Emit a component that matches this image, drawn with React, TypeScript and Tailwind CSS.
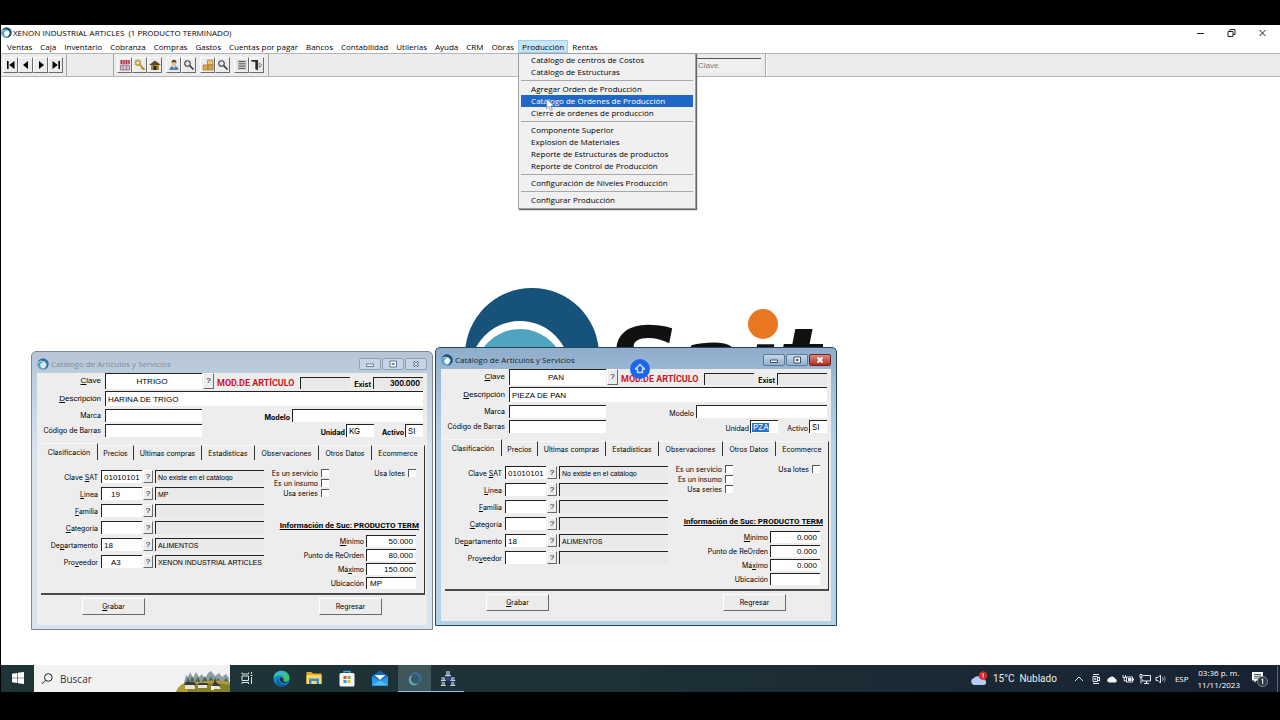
import type { ReactNode } from 'react'

const menus = [
  'Ventas',
  'Caja',
  'Inventario',
  'Cobranza',
  'Compras',
  'Gastos',
  'Cuentas por pagar',
  'Bancos',
  'Contabilidad',
  'Utilerías',
  'Ayuda',
  'CRM',
  'Obras',
  'Producción',
  'Rentas',
]

const productionMenu = [
  ['Catálogo de centros de Costos', 'Catálogo de Estructuras'],
  ['Agregar Orden de Producción', 'Catálogo de Ordenes de Producción', 'Cierre de ordenes de producción'],
  [
    'Componente Superior',
    'Explosion de Materiales',
    'Reporte de Estructuras de productos',
    'Reporte de Control de Producción',
  ],
  ['Configuración de Niveles Producción'],
  ['Configurar Producción'],
]

const SELECTED = 'Catálogo de Ordenes de Producción'

const tabs = [
  { label: 'Clasificación', width: 'w-[57px]' },
  { label: 'Precios', width: 'w-[36px]' },
  { label: 'Ultimas compras', width: 'w-[68px]' },
  { label: 'Estadísticas', width: 'w-[53px]' },
  { label: 'Observaciones', width: 'w-[64px]' },
  { label: 'Otros Datos', width: 'w-[53px]' },
  { label: 'Ecommerce', width: 'w-[53px]' },
]

type Lookup = { label: string; code: string; text: string; indent?: boolean }

type Article = {
  id: string
  active: boolean
  clave: string
  descripcion: string
  exist: string
  unidad: string
  lookups: Lookup[]
  stock: { label: string; value: string }[]
}

const trigo: Article = {
  id: 'trigo',
  active: false,
  clave: 'HTRIGO',
  descripcion: 'HARINA DE TRIGO',
  exist: '300.000',
  unidad: 'KG',
  lookups: [
    { label: 'Clave &SAT', code: '01010101', text: 'No existe en el catálogo' },
    { label: '&Linea', code: '19', text: 'MP', indent: true },
    { label: '&Familia', code: '', text: '' },
    { label: '&Categoría', code: '', text: '' },
    { label: 'De&partamento', code: '18', text: 'ALIMENTOS' },
    { label: 'Pro&veedor', code: 'A3', text: 'XENON INDUSTRIAL ARTICLES', indent: true },
  ],
  stock: [
    { label: '&Mínimo', value: '50.000' },
    { label: 'Punto de ReOrden', value: '80.000' },
    { label: 'Má&ximo', value: '150.000' },
    { label: 'Ubicación', value: 'MP' },
  ],
}

const pan: Article = {
  id: 'pan',
  active: true,
  clave: 'PAN',
  descripcion: 'PIEZA DE PAN',
  exist: '',
  unidad: 'PZA',
  lookups: [
    { label: 'Clave &SAT', code: '01010101', text: 'No existe en el catálogo' },
    { label: '&Linea', code: '', text: '' },
    { label: '&Familia', code: '', text: '' },
    { label: '&Categoría', code: '', text: '' },
    { label: 'De&partamento', code: '18', text: 'ALIMENTOS' },
    { label: 'Pro&veedor', code: '', text: '' },
  ],
  stock: [
    { label: '&Mínimo', value: '0.000' },
    { label: 'Punto de ReOrden', value: '0.000' },
    { label: 'Má&ximo', value: '0.000' },
    { label: 'Ubicación', value: '' },
  ],
}

const sunken = 'min-w-0 shrink-0 border-t border-l border-[#222] outline-none'
const raised =
  'flex shrink-0 items-center justify-center border border-t-white border-l-white border-r-[#6b6b6b] border-b-[#6b6b6b] bg-[#ececec] leading-none'
const labelFont = "font-['Inter','Liberation_Sans',sans-serif] text-[7px] leading-[9px]"

// "&" marks the shortcut letter that gets underlined
function Mnemonic({ text }: { text: string }) {
  const i = text.indexOf('&')
  if (i < 0) return <>{text}</>
  return (
    <>
      {text.slice(0, i)}
      <span className="underline">{text[i + 1]}</span>
      {text.slice(i + 2)}
    </>
  )
}

function SwirlLogo({ className, faded }: { className: string; faded?: boolean }) {
  return (
    <svg viewBox="0 0 24 24" className={className} aria-hidden>
      <circle cx="12" cy="12" r="11.5" fill={faded ? '#35709b' : '#17527a'} />
      <path d="M1.500 9c4-5 13-5 17 1.500C20 15 17 21 10 23.300 3 21 0 15 1.500 9z" fill="#d9ebf5" />
      <path d="M2 10.500c3-4 10-5 14-1-5-2-10 1-9.500 5.500C7 19 10 21 14 20.500c-1.500 1.300-3 2.200-5 2.500C3.500 21 .8 16 2 10.500z" fill="#4aa3bd" />
      <circle cx="12.500" cy="13.500" r="5" fill={faded ? '#dbe7f1' : '#fff'} />
    </svg>
  )
}

function ToolButton({ label, children }: { label: string; children: ReactNode }) {
  return (
    <button aria-label={label} className={`${raised} h-[16px] w-[15px]`}>
      {children}
    </button>
  )
}

function NavIcon({ d }: { d: string }) {
  return (
    <svg viewBox="0 0 12 12" className="h-3 w-3" fill="#000" aria-hidden>
      <path d={d} />
    </svg>
  )
}

function Magnifier() {
  return (
    <svg viewBox="0 0 12 12" className="h-3 w-3" aria-hidden>
      <circle cx="4.500" cy="4.500" r="2.800" fill="#dfe9f2" stroke="#444" strokeWidth="1.100" />
      <path d="M6.800 6.800l3.700 3.700" stroke="#333" strokeWidth="1.600" />
    </svg>
  )
}

function Toolbar() {
  return (
    <div className="flex h-6 items-stretch border-t border-b border-[#b4b4b4] bg-[#ececec]">
      <div className="flex w-[66px] items-center border-r border-[#a8a8a8] pl-[2px]">
        <ToolButton label="Primero">
          <NavIcon d="M2 2h1.600v8H2zM9.500 2v8L4.200 6z" />
        </ToolButton>
        <ToolButton label="Anterior">
          <NavIcon d="M8 2v8L3 6z" />
        </ToolButton>
        <ToolButton label="Siguiente">
          <NavIcon d="M4 2v8l5-4z" />
        </ToolButton>
        <ToolButton label="Último">
          <NavIcon d="M2.500 2v8l5.300-4zM8.400 2H10v8H8.400z" />
        </ToolButton>
      </div>
      <div className="w-[47px] border-r border-[#a8a8a8]" />
      <div className="flex w-[155px] items-center gap-1 border-r border-[#a8a8a8] pl-[3px]">
        <div className="flex">
          <ToolButton label="Punto de venta">
            <svg viewBox="0 0 12 12" className="h-3 w-3" aria-hidden>
              <path d="M1 1h10v4H1z" fill="#d98a94" />
              <path d="M2.500 1v4M5 1v4M7.500 1v4M10 1v4" stroke="#a02f45" />
              <path d="M1.500 6h9v5h-9z" fill="#d3c4ce" stroke="#8e6a80" strokeWidth=".8" />
              <path d="M4 6v5M7.500 6v5" stroke="#8e6a80" strokeWidth=".8" />
            </svg>
          </ToolButton>
          <ToolButton label="Llave">
            <svg viewBox="0 0 12 12" className="h-3 w-3" fill="none" aria-hidden>
              <circle cx="3.800" cy="3.800" r="2.300" stroke="#c9a24a" strokeWidth="1.900" />
              <path d="M5.600 5.600l5 5M8.300 8.500l-1.200 1.200M9.800 9.800l-1 1" stroke="#b98f35" strokeWidth="1.500" />
            </svg>
          </ToolButton>
          <ToolButton label="Almacén">
            <svg viewBox="0 0 12 12" className="h-3 w-3" aria-hidden>
              <path d="M0 6l6-4.500L12 6z" fill="#5d4c22" />
              <path d="M2 6h8v5H2z" fill="#9d8542" />
              <path d="M4.500 7h3v4h-3z" fill="#2e2614" />
            </svg>
          </ToolButton>
        </div>
        <div className="flex">
          <ToolButton label="Clientes">
            <svg viewBox="0 0 12 12" className="h-3 w-3" aria-hidden>
              <path d="M1.500 11c0-3 2-4 4.500-4s4.500 1 4.500 4z" fill="#4d7fa8" />
              <path d="M5 7h2l-1 3z" fill="#fff" />
              <ellipse cx="6" cy="4" rx="2.300" ry="2.900" fill="#e2b884" />
              <path d="M3.600 3.800C3.500 1.800 4.500.8 6 .8s2.500 1 2.400 3C7.500 2.600 5 2.600 3.600 3.800z" fill="#5c4322" />
            </svg>
          </ToolButton>
          <ToolButton label="Buscar cliente">
            <Magnifier />
          </ToolButton>
        </div>
        <div className="flex">
          <ToolButton label="Artículos">
            <svg viewBox="0 0 12 12" className="h-3 w-3" stroke="#9b7430" strokeWidth=".7" aria-hidden>
              <path d="M5.500 1h5.500v5H5.500z" fill="#edc374" />
              <path d="M1 6h5v5H1z" fill="#e0a94e" />
              <path d="M6 6h5v5H6z" fill="#d8a24c" />
            </svg>
          </ToolButton>
          <ToolButton label="Buscar artículo">
            <Magnifier />
          </ToolButton>
        </div>
        <div className="flex">
          <ToolButton label="Reporte">
            <svg viewBox="0 0 12 12" className="h-3 w-3" aria-hidden>
              <path d="M1.500 1h9v10h-9z" fill="#d4d4d4" />
              <path d="M2.500 2.500h7M2.500 4.800h7M2.500 7.100h7M2.500 9.400h7" stroke="#555" />
            </svg>
          </ToolButton>
          <ToolButton label="Salir">
            <svg viewBox="0 0 12 12" className="h-3 w-3" aria-hidden>
              <path d="M.5 1H7v10.500L4.300 10V2.800H.5z" fill="#2b2b2b" />
              <path d="M8.200 3.800L11 6.200 8.200 8.600z" fill="none" stroke="#777" strokeWidth=".9" />
            </svg>
          </ToolButton>
        </div>
      </div>
      <div className="flex w-[497px] items-center justify-end border-r border-[#a8a8a8] pr-1">
        <input
          aria-label="Clave"
          placeholder="Clave"
          className="h-[15px] w-[68px] border-t border-l border-[#555] bg-[#efefef] pl-1 text-[8px] outline-none placeholder:text-[#7d7d7d]"
        />
      </div>
      <div className="flex-1 border-l border-white" />
    </div>
  )
}

function ProductionMenu() {
  return (
    <div className="absolute top-full left-0 z-30 w-[178px] border border-[#a0a0a0] bg-[#f0f0f0] px-[2px] pb-[2px] shadow-[1px_1px_1px_#666]">
      {productionMenu.map((group, i) => (
        <ul key={i} className={i > 0 ? 'mt-[2px] border-t border-[#a8a8a8] pt-[2px]' : ''}>
          {group.map((item) => (
            <li key={item}>
              <button
                className={`block h-3 w-full pl-[10px] text-left leading-3 whitespace-nowrap ${
                  item === SELECTED ? 'bg-[#1f68c6] text-white' : ''
                }`}
              >
                {item}
              </button>
            </li>
          ))}
        </ul>
      ))}
      <svg viewBox="0 0 12 18" className="absolute top-[44px] left-[27px] h-[14px] w-[9px]" aria-hidden>
        <path d="M1 1v13l3-3 2.200 5 2.300-1-2.200-4.800H11z" fill="#fff" stroke="#667" strokeWidth=".8" />
      </svg>
    </div>
  )
}

function MenuBar() {
  return (
    <nav aria-label="Principal">
      <ul className="flex h-[13px] items-stretch pl-[2px] leading-[13px]">
        {menus.map((menu) => (
          <li key={menu} className="relative">
            <button
              className={`block h-full border px-[3px] leading-[11px] whitespace-nowrap ${
                menu === 'Producción' ? 'border-[#99d1f5] bg-[#c6e5f8]' : 'border-transparent'
              }`}
            >
              {menu}
            </button>
            {menu === 'Producción' && <ProductionMenu />}
          </li>
        ))}
      </ul>
    </nav>
  )
}

function TitleBar() {
  return (
    <header className="flex h-[15px] items-center">
      <SwirlLogo className="h-[11px] w-[11px]" />
      <h1 className="ml-px whitespace-pre">XENON INDUSTRIAL ARTICLES  (1 PRODUCTO TERMINADO)</h1>
      <div className="ml-auto flex gap-[20px] pr-3">
        <button aria-label="Minimizar">
          <svg viewBox="0 0 10 10" className="h-[10px] w-[11px]" stroke="#222" aria-hidden>
            <path d="M1.500 5.500h7" />
          </svg>
        </button>
        <button aria-label="Restaurar">
          <svg viewBox="0 0 10 10" className="h-[10px] w-[11px]" fill="none" stroke="#222" aria-hidden>
            <path d="M1.500 3.500h5v5h-5zM3.500 3.500v-2h5v5h-2" />
          </svg>
        </button>
        <button aria-label="Cerrar">
          <svg viewBox="0 0 10 10" className="h-[10px] w-[11px]" stroke="#222" aria-hidden>
            <path d="M2 2l6 6M8 2L2 8" />
          </svg>
        </button>
      </div>
    </header>
  )
}

function WindowButtons({ active }: { active: boolean }) {
  const base = 'flex h-[12px] w-[22px] items-center justify-center rounded-[2px] border'
  const plain = active ? 'border-[#5f7890] bg-linear-to-b from-[#c6d8ea] to-[#92b0cd]' : 'border-[#8fa1b3] bg-[#c5d5e5]'
  const ink = active ? '#3d5068' : '#66788a'
  return (
    <div className="ml-auto flex gap-[1px]">
      <button aria-label="Minimizar" className={`${base} ${plain}`}>
        <svg viewBox="0 0 10 8" className="h-2 w-[10px]" fill="#fff" stroke={ink} aria-hidden>
          <path d="M1.500 4h7v2.500h-7z" />
        </svg>
      </button>
      <button aria-label="Maximizar" className={`${base} ${plain}`}>
        <svg viewBox="0 0 10 8" className="h-2 w-[10px]" fill="#fff" stroke={ink} aria-hidden>
          <path d="M2 1h6.500v6H2zM4.200 3.500h2v1.200h-2z" />
        </svg>
      </button>
      <button
        aria-label="Cerrar"
        className={`${base} ${active ? 'border-[#6b2525] bg-linear-to-b from-[#d88a80] to-[#b3251c]' : plain}`}
      >
        <svg viewBox="0 0 10 8" className="h-2 w-[10px]" aria-hidden>
          <path d="M2.500 1.500l5 5M7.500 1.500l-5 5" stroke={active ? '#fff' : ink} strokeWidth={active ? 1.8 : 2.4} />
          {!active && <path d="M2.500 1.500l5 5M7.500 1.500l-5 5" stroke="#e4edf5" strokeWidth="1" />}
        </svg>
      </button>
    </div>
  )
}

function HelpButton({ label, className }: { label: string; className: string }) {
  return (
    <button type="button" aria-label={`Buscar ${label.replace('&', '')}`} className={`${raised} ${className}`}>
      ?
    </button>
  )
}

function LookupRow({ id, row }: { id: string; row: Lookup }) {
  return (
    <div className="flex h-[13px] items-center">
      <label htmlFor={id} className={`w-[57px] pt-[2px] text-right ${labelFont}`}>
        <Mnemonic text={row.label} />
      </label>
      <input
        id={id}
        defaultValue={row.code}
        className={`${sunken} ml-[3px] h-[13px] w-[41px] bg-white text-[8px] ${row.indent ? 'pl-[9px]' : 'pl-[2px]'}`}
      />
      <HelpButton label={row.label} className="ml-px h-[13px] w-[10px] text-[8px]" />
      <input
        aria-label={`${row.label.replace('&', '')}, nombre`}
        readOnly
        defaultValue={row.text}
        className={`${sunken} ml-[2px] h-[13px] w-[109px] bg-[#e9e9e9] pl-[2px] text-[7px]`}
      />
    </div>
  )
}

function Check({ id, label }: { id: string; label: string }) {
  return (
    <div className="flex h-[10px] items-center justify-end gap-[3px]">
      <label htmlFor={id} className={`whitespace-nowrap ${labelFont}`}>
        {label}
      </label>
      <input
        id={id}
        type="checkbox"
        className="h-2 w-2 shrink-0 appearance-none border-t border-l border-[#555] bg-white"
      />
    </div>
  )
}

function ArticleWindow({ article, className }: { article: Article; className: string }) {
  const { id, active } = article
  const strong = active ? '' : 'font-bold'
  return (
    <section
      className={`absolute flex w-[402px] flex-col rounded-t-[5px] border px-[5px] pb-1 ${
        active
          ? 'border-[#1f4a55] bg-[#b4d2e9] bg-linear-to-b from-[#8fadcc] via-[#a9c4de] via-20% to-[#b4d2e9] to-35%'
          : 'border-[#7c8794] bg-[#d7e3ef] bg-linear-to-b from-[#b6c6d7] via-[#c6d6e6] via-20% to-[#d7e3ef] to-35%'
      } ${className}`}
    >
      <header className="flex h-[21px] items-center pt-[2px]">
        <SwirlLogo className="h-[12px] w-[12px]" faded={!active} />
        <h2
          className={`ml-[2px] font-['Open_Sans','Noto_Sans',sans-serif] text-[8px] ${
            active ? 'text-[#16222e]' : 'text-[#7d8b99]'
          }`}
        >
          Catálogo de Artículos y Servicios
        </h2>
        <WindowButtons active={active} />
      </header>

      <form className="bg-[#ededed] pb-[10px]" onSubmit={(e) => e.preventDefault()}>
        <div className="flex flex-col pr-1">
          <div className="flex h-4 items-center text-[8px] leading-[10px]">
            <label htmlFor={`${id}-clave`} className="w-16 text-right">
              <Mnemonic text="&Clave" />
            </label>
            <input
              id={`${id}-clave`}
              defaultValue={article.clave}
              className={`${sunken} ml-1 h-4 w-[97px] bg-white pr-1 text-center`}
            />
            <HelpButton label="Clave" className="ml-px h-4 w-[11px]" />
            <label
              htmlFor={`${id}-mod`}
              className="ml-[3px] w-[83px] shrink-0 pt-1 font-['Roboto','Liberation_Sans',sans-serif] text-[9px] leading-3 font-bold whitespace-nowrap text-[#cf1526]"
            >
              MOD.DE ARTÍCULO
            </label>
            <input id={`${id}-mod`} readOnly className={`${sunken} h-3 w-[50px] self-end bg-[#e9e9e9]`} />
            <label htmlFor={`${id}-exist`} className={`ml-auto self-end font-bold ${labelFont}`}>
              Exist
            </label>
            <input
              id={`${id}-exist`}
              readOnly
              defaultValue={article.exist}
              className={`${sunken} ml-[2px] h-3 w-[50px] self-end bg-[#e9e9e9] pr-[3px] text-right font-bold ${labelFont}`}
            />
          </div>
          <div className="mt-[2px] flex h-[15px] items-center text-[8px]">
            <label htmlFor={`${id}-descripcion`} className="w-16 text-right">
              <Mnemonic text="&Descripción" />
            </label>
            <input
              id={`${id}-descripcion`}
              defaultValue={article.descripcion}
              className={`${sunken} ml-1 h-[15px] flex-1 bg-white pl-[2px]`}
            />
          </div>
          <div className={`mt-[3px] flex h-[13px] items-center ${labelFont}`}>
            <label htmlFor={`${id}-marca`} className="w-16 text-right">
              Marca
            </label>
            <input id={`${id}-marca`} className={`${sunken} ml-1 h-[13px] w-[97px] bg-white`} />
            <label htmlFor={`${id}-modelo`} className={`ml-auto self-end ${strong}`}>
              Modelo
            </label>
            <input id={`${id}-modelo`} className={`${sunken} ml-[2px] h-[13px] w-[131px] bg-white`} />
          </div>
          <div className={`mt-[2px] flex h-[13px] items-center ${labelFont}`}>
            <label htmlFor={`${id}-barras`} className="w-16 text-right whitespace-nowrap">
              Código de Barras
            </label>
            <input id={`${id}-barras`} className={`${sunken} ml-1 h-[13px] w-[97px] bg-white`} />
            <label htmlFor={`${id}-unidad`} className={`ml-auto self-end ${strong}`}>
              Unidad
            </label>
            <span className={`${sunken} ml-px flex h-[13px] w-[28px] items-center bg-white pl-px`}>
              <input
                id={`${id}-unidad`}
                defaultValue={article.unidad}
                className={`h-[9px] w-[17px] pl-px text-[8px] outline-none ${active ? 'bg-[#2b70c9] text-white' : ''}`}
              />
            </span>
            <label htmlFor={`${id}-activo`} className={`w-[30px] self-end text-right ${strong}`}>
              Activo
            </label>
            <input
              id={`${id}-activo`}
              defaultValue="SI"
              className={`${sunken} ml-px h-[13px] w-[18px] bg-white pl-[2px] text-[8px]`}
            />
          </div>
        </div>

        <div role="tablist" className={`mt-[6px] ml-1 flex h-[17px] items-end ${labelFont}`}>
          {tabs.map((tab, i) => (
            <button
              key={tab.label}
              type="button"
              role="tab"
              aria-selected={i === 0}
              className={`flex shrink-0 items-center justify-center border-t border-r border-t-[#f8f8f8] border-r-[#333] whitespace-nowrap ${
                i === 0 ? 'h-[17px]' : 'h-[15px]'
              } ${tab.width}`}
            >
              {tab.label}
            </button>
          ))}
        </div>

        <div className="mr-[2px] ml-1 flex h-[135px] border-r border-b-2 border-r-[#333] border-b-[#4a4a4a]">
          <div className="flex flex-col gap-1 pt-[10px]">
            {article.lookups.map((row) => (
              <LookupRow key={row.label} id={`${id}-${row.label}`} row={row} />
            ))}
          </div>
          <div className="flex flex-1 flex-col pt-2">
            <div className="flex items-start justify-between pr-2">
              <div className="w-[65px]">
                <Check id={`${id}-servicio`} label="Es un servicio" />
                <Check id={`${id}-insumo`} label="Es un insumo" />
                <Check id={`${id}-series`} label="Usa series" />
              </div>
              <Check id={`${id}-lotes`} label="Usa lotes" />
            </div>
            <h3 className="mt-[23px] pr-[5px] text-right font-['Roboto','Liberation_Sans',sans-serif] text-[8px] leading-[10px] font-bold whitespace-nowrap underline">
              Información de Suc: PRODUCTO TERM
            </h3>
            <div className="mt-1 flex flex-col gap-[2px] pr-2">
              {article.stock.map((row) => (
                <div key={row.label} className="flex h-3 items-center justify-end">
                  <label htmlFor={`${id}-${row.label}`} className={labelFont}>
                    <Mnemonic text={row.label} />
                  </label>
                  <input
                    id={`${id}-${row.label}`}
                    defaultValue={row.value}
                    className={`${sunken} ml-[2px] h-3 w-[50px] bg-white px-[3px] text-[8px] ${
                      row.label === 'Ubicación' ? '' : 'text-right'
                    }`}
                  />
                </div>
              ))}
            </div>
          </div>
        </div>

        <div className={`mt-[3px] flex justify-between pr-[45px] pl-[45px] ${labelFont}`}>
          <button className={`${raised} h-[17px] w-[63px]`}>
            <span>
              <Mnemonic text="&Grabar" />
            </span>
          </button>
          <button type="button" className={`${raised} h-[17px] w-[63px]`}>
            Regresar
          </button>
        </div>
      </form>
    </section>
  )
}

function BrandLogo() {
  return (
    <svg viewBox="459 280 364 150" className="mx-auto h-[150px] w-[364px]" aria-hidden>
      <circle cx="532" cy="355" r="67" fill="#17527a" />
      <circle cx="520" cy="371" r="50" fill="#fff" />
      <circle cx="520" cy="374" r="45" fill="#4fa5bd" />
      <text
        x="607"
        y="398"
        fontSize="98"
        fontWeight="bold"
        fontStyle="italic"
        fill="#111"
        fontFamily="'DejaVu Sans', sans-serif"
      >
        Saıt
      </text>
      <circle cx="763" cy="324" r="15" fill="#e87722" />
    </svg>
  )
}

function Desktop() {
  return (
    <main className="relative flex-1 overflow-hidden bg-white pt-[203px]">
      <BrandLogo />
      <ArticleWindow article={trigo} className="top-[274px] left-[30px]" />
      <ArticleWindow article={pan} className="top-[270px] left-[434px]" />
      <button
        aria-label="Subir"
        className="absolute top-[282px] left-[629px] flex h-5 w-5 items-center justify-center rounded-full bg-[#1d66ea]"
      >
        <svg viewBox="0 0 14 14" className="h-[14px] w-[14px]" fill="none" stroke="#cfe0ff" aria-hidden>
          <path d="M7 2.500l4.500 4.500H9.500v3.500h-5V7h-2z" strokeLinejoin="round" strokeWidth="1.400" />
        </svg>
      </button>
    </main>
  )
}

function TaskButton({ label, state, children }: { label: string; state?: 'active' | 'open'; children: ReactNode }) {
  return (
    <button
      aria-label={label}
      className={`flex h-full w-[33px] items-center justify-center border-b ${
        state === 'active'
          ? 'border-[#8fc3ea] bg-[#3f565b]'
          : state === 'open'
            ? 'border-[#8fc3ea]'
            : 'border-transparent'
      }`}
    >
      {children}
    </button>
  )
}

function SearchPicture() {
  return (
    <svg viewBox="0 0 54 27" className="h-full w-[54px]" aria-hidden>
      <path d="M8 18l2-8 2 2 2-5 3 6 3-6 3 5 3-3 3 5 3-6 3-2 4 5 4-3 3 4 4-3 3 4v14H8z" fill="#8b9da6" />
      <path d="M10 18l2-6 2 5 2-6 3 6 3-5 3 6 4-7 3 6 3-6 3 7 4-5 4 6 4-6 4 7v6H10z" fill="#4e6350" />
      <path d="M0 27c3-9 12-12 24-10 10-2 22-2 30 0v10z" fill="#b09a35" />
      <path d="M12 23c12-5 26-6 42-3v7H12z" fill="#83822a" />
      <path d="M9 19h8l2 3v2H9zM22 20h9v3h-9zM36 21h7l2 3h-9z" fill="#e9e4d8" />
      <path d="M8 19l2-2h8l3 3H9zM21 20l2-2h8l2 2zM36 21l2-4 1-5 1 5 5 4z" fill="#3a3a3c" />
      <path d="M35 21h3v4h-3z" fill="#f3f0e6" />
    </svg>
  )
}

function Taskbar() {
  return (
    <footer className="flex h-[27px] items-stretch bg-linear-to-r from-[#1e3538] via-[#1d3036] to-[#172232] text-white">
      <TaskButton label="Inicio">
        <svg viewBox="0 0 12 12" className="h-3 w-3" fill="#fff" aria-hidden>
          <path d="M0 1.700l5.300-.8v4.800H0zM5.900.8L12 0v5.700H5.900zM0 6.300h5.300v4.800L0 10.300zM5.900 6.300H12V12l-6.100-.8z" />
        </svg>
      </TaskButton>
      <div className="flex w-[196px] items-center bg-[#f2f2f2] pl-[7px] text-[#333]">
        <svg viewBox="0 0 12 12" className="h-3 w-3 shrink-0" fill="none" stroke="#222" aria-hidden>
          <circle cx="7.300" cy="4.500" r="3.800" />
          <path d="M4.500 7.200L.8 11" />
        </svg>
        <input
          aria-label="Buscar"
          placeholder="Buscar"
          className="ml-[7px] min-w-0 flex-1 pt-px text-[10px] outline-none placeholder:text-[#333]"
        />
        <SearchPicture />
      </div>
      <TaskButton label="Vista de tareas">
        <svg viewBox="0 0 12 12" className="h-3 w-3" fill="none" stroke="#dfe6e8" aria-hidden>
          <path d="M1 4h6.500v4.500H1zM1 .5V2h6.500V.5M1 12v-1.500h6.500V12M10.500 0v2M10.500 5v7M9.500 3.500h2" />
        </svg>
      </TaskButton>
      <TaskButton label="Edge">
        <svg viewBox="0 0 18 18" className="ml-[3px] h-[17px] w-[17px]" aria-hidden>
          <circle cx="9" cy="9" r="8.500" fill="#1a86cf" />
          <path d="M.7 7.500C2 2 8 0 12.500 1.500 16 3 18 6 17.400 9.500c-.6 2.500-4 3.500-6.400 2 1.500-3-.5-5.500-3.500-5.700C4 5.500 1.500 7 .7 9z" fill="#3cc26b" />
          <path d="M.7 7.500C1.500 3.500 5 1 9 1c3 1 5 3 4 6-1-2-4-3-6-2.500C3.500 5 1.500 6.500.7 7.500z" fill="#36b7d8" />
          <path d="M6 9c-.5 4 3 7 8.500 6C12 17.800 8 18 5 16.500 2.500 14 3 10 6 9z" fill="#0f5aa6" />
          <path d="M7.500 8.500c1.500-1.500 4 0 3.500 3 .5 1.500 3.500 2 5.500.5-1 2-5 3-7.500 1-1.500-1.200-2.200-3-1.500-4.500z" fill="#1e3538" />
        </svg>
      </TaskButton>
      <TaskButton label="Explorador de archivos">
        <svg viewBox="0 0 16 14" className="ml-[3px] h-[14px] w-[16px]" aria-hidden>
          <path d="M.5 1h5l1.500 1.500h8.500V13H.5z" fill="#e6a91f" />
          <path d="M.5 4h15v9H.5z" fill="#fbd766" />
          <path d="M3 7.500h10V13h-2.500v-3h-5v3H3z" fill="#3b8fd0" />
        </svg>
      </TaskButton>
      <TaskButton label="Tienda">
        <svg viewBox="0 0 16 17" className="ml-[3px] h-[17px] w-4" aria-hidden>
          <path d="M5 4V1.500h6V4" fill="none" stroke="#35a7e0" strokeWidth="1.500" />
          <rect x=".5" y="3" width="15" height="13.500" rx="1.500" fill="#f4f6f7" />
          <path d="M4.500 6h3v3h-3z" fill="#e5512b" />
          <path d="M8.500 6h3v3h-3z" fill="#7db82b" />
          <path d="M4.500 10h3v3h-3z" fill="#2e9bdc" />
          <path d="M8.500 10h3v3h-3z" fill="#f6b71a" />
        </svg>
      </TaskButton>
      <TaskButton label="Correo">
        <svg viewBox="0 0 18 16" className="ml-[3px] h-4 w-[18px]" aria-hidden>
          <path d="M1 6l8-5.500L17 6v9.500H1z" fill="#1565b8" />
          <path d="M3.500 5h11L9 10z" fill="#f2f6fa" />
          <path d="M1 6l8 5 8-5v9.500H1z" fill="#2a9be6" />
          <path d="M1 15.500l8-5 8 5z" fill="#4fc0f5" />
        </svg>
      </TaskButton>
      <div className="ml-[3px] flex">
        <TaskButton label="SAIT" state="active">
          <svg viewBox="0 0 16 16" className="h-[15px] w-[15px]" aria-hidden>
            <path d="M3 3.500C7-1 16 1 15.500 8.500 15 13 11 16 6.500 15c5-.5 7.500-5 5.500-8.500S6 3 3 3.500z" fill="#2f6f9d" />
            <path d="M3 5.500c-2.500 4-.5 9 4 9.700 2 .2 4-.5 5.200-1.900-3 1-6 .2-7.200-2S4 6.500 6 4.500c-1 0-2.200.2-3 1z" fill="#59a9c9" />
          </svg>
        </TaskButton>
        <TaskButton label="Red de equipos" state="open">
          <svg viewBox="0 0 16 17" className="h-[17px] w-4" aria-hidden>
            <path d="M8 5v6M3 12V9h10v3" fill="none" stroke="#2a3fa0" strokeWidth="2" />
            <path d="M6 1h4v4H6zM1.500 7h3.500v3H1.500zM11 7h3.500v3H11zM1.500 12h3.500v3H1.500zM11 12h3.500v3H11z" fill="#8d97a6" />
            <path d="M5 5h6v1.200H5zM.8 10h5v1H.8zM10.300 10h5v1h-5zM.8 15h5v1H.8zM10.300 15h5v1h-5z" fill="#c9ced6" />
          </svg>
        </TaskButton>
      </div>

      <div className="ml-auto flex items-center">
        <button className="flex items-center gap-[5px] text-[10px] whitespace-nowrap text-[#e8ecf0]">
          <svg viewBox="0 0 18 16" className="h-4 w-[18px]" aria-hidden>
            <path d="M4 14a3.600 3.600 0 0 1 0-7 5 5 0 0 1 8.500 1.200A3 3 0 0 1 14 14z" fill="#b5cdf2" />
            <circle cx="13" cy="4.500" r="4.300" fill="#d3262a" />
            <path d="M12.200 3.300l1-.8v4" fill="none" stroke="#fff" strokeWidth=".9" />
          </svg>
          <span className="font-['Roboto','Liberation_Sans',sans-serif] whitespace-pre">15°C  Nublado</span>
        </button>
        <div className="ml-[17px] flex items-center gap-1">
          <svg viewBox="0 0 10 10" className="h-[10px] w-[10px]" fill="none" stroke="#e5e9ee" aria-hidden>
            <path d="M1 7l4-4 4 4" />
          </svg>
          <svg viewBox="0 0 12 12" className="ml-[2px] h-3 w-3" fill="none" stroke="#e5e9ee" aria-hidden>
            <path d="M3 3.500h4.500v5H3zM7.500 5l2-1v4l-2-1M3 1.500h6M3 10.500h6" />
            <circle cx="5.200" cy="6" r=".8" />
          </svg>
          <svg viewBox="0 0 12 12" className="h-3 w-3" fill="#f2f4f6" aria-hidden>
            <path d="M3 9.500a2.300 2.300 0 0 1 0-4.500 3.500 3.500 0 0 1 6.200.8A2 2 0 0 1 9.700 9.500z" />
          </svg>
          <svg viewBox="0 0 12 12" className="h-3 w-3" fill="none" stroke="#e5e9ee" aria-hidden>
            <path d="M4.500 4h6v5h-6zM11.500 5.500v2M1 2v2.500h2.500V2M2.200 4.500V8h2" />
            <path d="M6 5h3.500v3H6z" fill="#e5e9ee" stroke="none" />
          </svg>
          <svg viewBox="0 0 12 12" className="ml-px h-3 w-3" fill="none" stroke="#e5e9ee" aria-hidden>
            <path d="M4 2.500h7.500V8H3.500V6.500M7.500 8v2.500M5 10.500h5M1 1.500h2v3H1zM2 4.500v6" />
          </svg>
          <svg viewBox="0 0 12 12" className="h-3 w-3" fill="none" stroke="#e5e9ee" aria-hidden>
            <path d="M1 4.500h2l2.500-2.500v8L3 7.500H1zM7.500 4.500c.8 1 .8 2 0 3" />
            <path d="M9 3c1.600 2 1.600 4 0 6" stroke="#8b95a2" />
          </svg>
        </div>
        <span className="ml-2 text-[8px]">ESP</span>
        <div className="ml-[9px] text-center text-[8px] leading-3 whitespace-nowrap">
          <div>03:36 p. m.</div>
          <div>11/11/2023</div>
        </div>
        <button aria-label="1 notificación nueva" className="mr-2 ml-[11px]">
          <svg viewBox="0 0 18 18" className="h-[18px] w-[18px]" aria-hidden>
            <path d="M1 2h11v8.500H5.500L3.500 13v-2.500H1z" fill="#fff" />
            <path d="M3 4.500h7M3 6.300h7M3 8.100h7" stroke="#1b2838" strokeWidth=".8" />
            <circle cx="11.500" cy="11.500" r="5" fill="#2c3744" stroke="#98a1ab" strokeWidth=".8" />
            <path d="M10.300 10l1.400-1.200v5.400" fill="none" stroke="#fff" />
          </svg>
        </button>
        <div className="mr-[2px] h-full w-px bg-[#5d6875]" />
      </div>
    </footer>
  )
}

export default function App() {
  return (
    <div className="flex min-h-screen flex-col bg-black pt-[25px] pb-[28px] pl-px font-['Liberation_Sans',Arial,sans-serif] text-black">
      <div className="flex flex-1 flex-col bg-white font-['Open_Sans','Noto_Sans',sans-serif]">
        <div className="text-[8px]">
          <TitleBar />
          <MenuBar />
        </div>
        <div className="font-['Liberation_Sans',Arial,sans-serif]">
          <Toolbar />
        </div>
        <div className="flex flex-1 flex-col font-['Liberation_Sans',Arial,sans-serif]">
          <Desktop />
        </div>
        <Taskbar />
      </div>
    </div>
  )
}
